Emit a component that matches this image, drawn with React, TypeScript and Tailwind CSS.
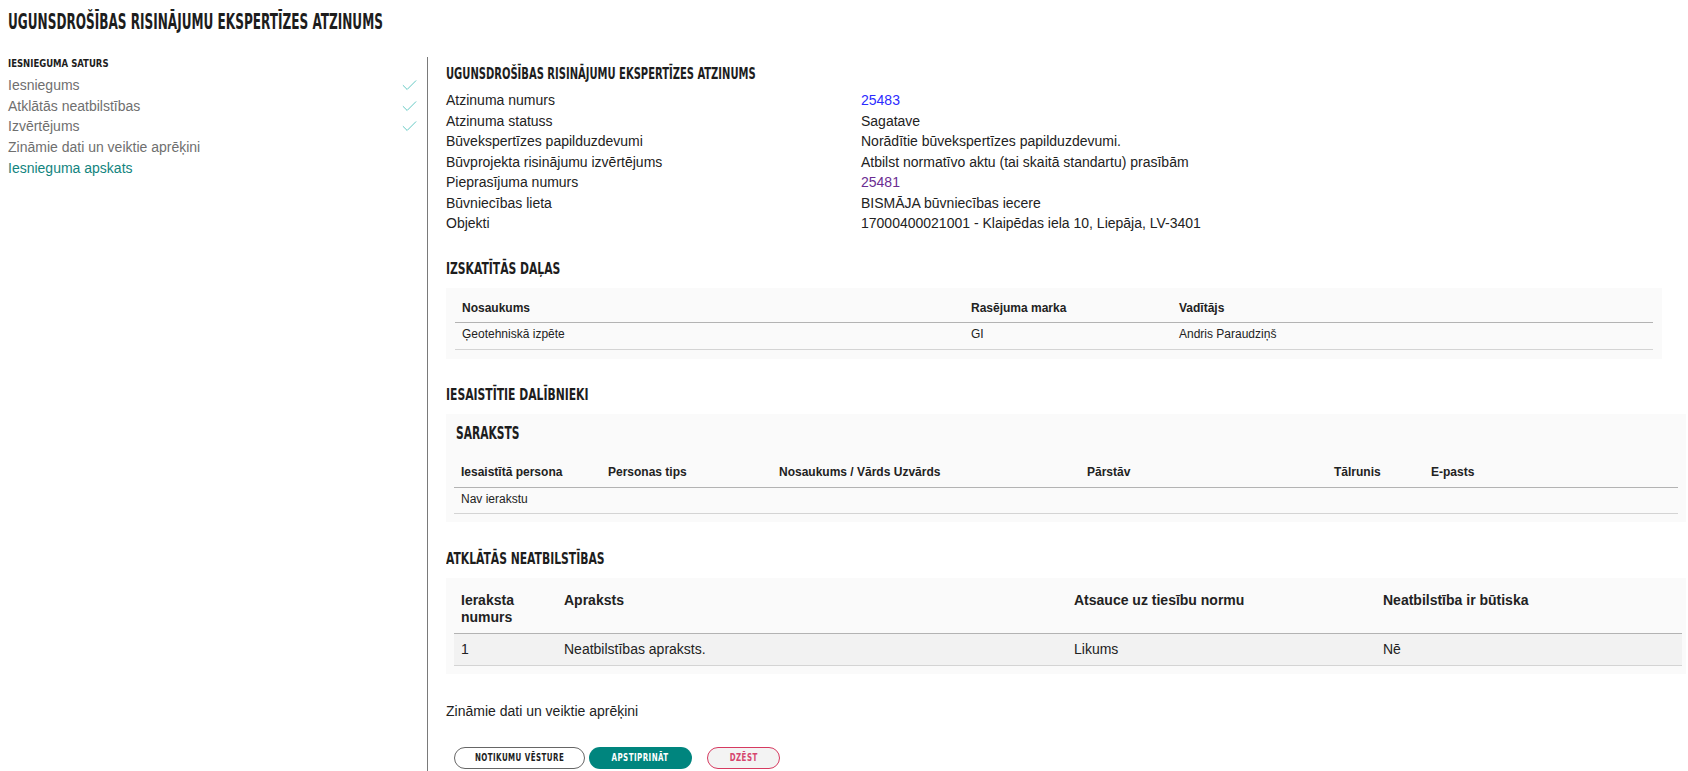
import { Check } from "lucide-react"

const head = "font-['Liberation_Sans_Narrow','DejaVu_Sans_Condensed',sans-serif] font-bold uppercase text-[#1d1d1d]"

const details: [string, string, string?][] = [
  ["Atzinuma numurs", "25483", "text-[#2b2bff]"],
  ["Atzinuma statuss", "Sagatave"],
  ["Būvekspertīzes papilduzdevumi", "Norādītie būvekspertīzes papilduzdevumi."],
  ["Būvprojekta risinājumu izvērtējums", "Atbilst normatīvo aktu (tai skaitā standartu) prasībām"],
  ["Pieprasījuma numurs", "25481", "text-[#6b2c91]"],
  ["Būvniecības lieta", "BISMĀJA būvniecības iecere"],
  ["Objekti", "17000400021001 - Klaipēdas iela 10, Liepāja, LV-3401"],
]

const nav = [
  { label: "Iesniegums", done: true },
  { label: "Atklātās neatbilstības", done: true },
  { label: "Izvērtējums", done: true },
  { label: "Zināmie dati un veiktie aprēķini", done: false },
]

// condensed display face squeezed to the width of the original heading font
function Squeeze({ children, className }: { children: string; className: string }) {
  return <span className={`inline-block whitespace-nowrap ${className}`}>{children}</span>
}

function SectionTitle({ children }: { children: string }) {
  return (
    <h3 className={`${head} text-[16px] leading-[20px] mb-[9px]`}>
      <Squeeze className="origin-left scale-x-[0.75]">{children}</Squeeze>
    </h3>
  )
}

export default function App() {
  return (
    <div className="min-h-screen bg-white font-['Liberation_Sans',Arial,sans-serif] text-[#222]">
      <h1 className={`${head} text-[21px] leading-[28px] pl-2 pt-[8px]`}>
        <Squeeze className="origin-left scale-x-[0.64]">Ugunsdrošības risinājumu ekspertīzes atzinums</Squeeze>
      </h1>

      <div className="flex mt-[21px]">
        {/* Sidebar */}
        <aside className="w-[427px] shrink-0 pl-2 pr-[8px]">
          <div className={`${head} text-[11px] leading-[14px]`}>
            <Squeeze className="origin-left scale-x-[0.86]">Iesnieguma saturs</Squeeze>
          </div>
          <ul className="mt-[4px] text-[14px] leading-[20.7px] text-[#6f6f6f]">
            {nav.map((n) => (
              <li key={n.label} className="flex items-center justify-between">
                <span>{n.label}</span>
                {n.done && <Check className="w-[19px] h-[19px] text-[#5cc6c0]" strokeWidth={1.2} />}
              </li>
            ))}
            <li className="text-[#12847e]">Iesnieguma apskats</li>
          </ul>
        </aside>

        {/* Main content */}
        <main className="flex-1 border-l border-[#7a7a7a] pl-[18px] pt-[7px] pr-[2px] pb-[2px]">
          <h2 className={`${head} text-[15px] leading-[20px]`}>
            <Squeeze className="origin-left scale-x-[0.74]">Ugunsdrošības risinājumu ekspertīzes atzinums</Squeeze>
          </h2>
          <div className="mt-[6px] text-[14px] leading-[20.5px]">
            {details.map(([k, v, c]) => (
              <div key={k} className="flex">
                <div className="w-[415px] shrink-0">{k}</div>
                <div className={c ?? ""}>{v}</div>
              </div>
            ))}
          </div>

          {/* Izskatītās daļas */}
          <div className="mt-[25px]">
            <SectionTitle>Izskatītās daļas</SectionTitle>
            <div className="bg-[#fafafa] w-[1216px] px-[9px] pt-[13px] pb-[9px]">
              <table className="w-full text-[12px] leading-[14px] border-collapse">
                <thead>
                  <tr className="border-b border-[#b3b3b3] text-left">
                    <th className="w-[509px] pl-[7px] pb-[7px] font-bold">Nosaukums</th>
                    <th className="w-[208px] pl-[7px] pb-[7px] font-bold">Rasējuma marka</th>
                    <th className="pl-[7px] pb-[7px] font-bold">Vadītājs</th>
                  </tr>
                </thead>
                <tbody>
                  <tr className="border-b border-[#d4d4d4]">
                    <td className="pl-[7px] pt-[4px] pb-[8px]">Ģeotehniskā izpēte</td>
                    <td className="pl-[7px] pt-[4px] pb-[8px]">GI</td>
                    <td className="pl-[7px] pt-[4px] pb-[8px]">Andris Paraudziņš</td>
                  </tr>
                </tbody>
              </table>
            </div>
          </div>

          {/* Iesaistītie dalībnieki */}
          <div className="mt-[26px]">
            <SectionTitle>Iesaistītie dalībnieki</SectionTitle>
            <div className="bg-[#fafafa] px-[8px] pt-[8px] pb-[8px]">
              <div className={`${head} text-[18px] leading-[22px] pl-[2px]`}>
                <Squeeze className="origin-left scale-x-[0.66]">Saraksts</Squeeze>
              </div>
              <table className="mt-[21px] w-full text-[12px] leading-[14px] border-collapse">
                <thead>
                  <tr className="border-b border-[#b3b3b3] text-left">
                    <th className="w-[147px] pl-[7px] pb-[8px] font-bold">Iesaistītā persona</th>
                    <th className="w-[171px] pl-[7px] pb-[8px] font-bold">Personas tips</th>
                    <th className="w-[308px] pl-[7px] pb-[8px] font-bold">Nosaukums / Vārds Uzvārds</th>
                    <th className="w-[247px] pl-[7px] pb-[8px] font-bold">Pārstāv</th>
                    <th className="w-[97px] pl-[7px] pb-[8px] font-bold">Tālrunis</th>
                    <th className="pl-[7px] pb-[8px] font-bold">E-pasts</th>
                  </tr>
                </thead>
                <tbody>
                  <tr className="border-b border-[#d4d4d4]">
                    <td colSpan={6} className="pl-[7px] pt-[4px] pb-[7px]">
                      Nav ierakstu
                    </td>
                  </tr>
                </tbody>
              </table>
            </div>
          </div>

          {/* Atklātās neatbilstības */}
          <div className="mt-[27px]">
            <SectionTitle>Atklātās neatbilstības</SectionTitle>
            <div className="bg-[#fafafa] pl-[8px] pr-[4px] pt-[14px] pb-[8px]">
              <table className="w-full text-[14px] leading-[17px] border-collapse">
                <thead>
                  <tr className="border-b border-[#b3b3b3] text-left align-top">
                    <th className="w-[103px] pl-[7px] pr-[7px] pb-[7px] font-bold">Ieraksta numurs</th>
                    <th className="w-[510px] pl-[7px] pb-[7px] font-bold">Apraksts</th>
                    <th className="w-[309px] pl-[7px] pb-[7px] font-bold">Atsauce uz tiesību normu</th>
                    <th className="pl-[7px] pb-[7px] font-bold">Neatbilstība ir būtiska</th>
                  </tr>
                </thead>
                <tbody>
                  <tr className="bg-[#f2f2f2] border-b border-[#d4d4d4]">
                    <td className="pl-[7px] py-[7px]">1</td>
                    <td className="pl-[7px] py-[7px]">Neatbilstības apraksts.</td>
                    <td className="pl-[7px] py-[7px]">Likums</td>
                    <td className="pl-[7px] py-[7px]">Nē</td>
                  </tr>
                </tbody>
              </table>
            </div>
          </div>

          <p className="mt-[27px] text-[14px] leading-[20px]">Zināmie dati un veiktie aprēķini</p>

          <div className="mt-[26px] pl-[8px] flex items-center">
            <button className={`${head} w-[131px] h-[22px] rounded-full border border-[#666] bg-white text-[10.5px] tracking-[0.6px]`}>
              <Squeeze className="origin-center scale-x-[0.75]">Notikumu vēsture</Squeeze>
            </button>
            <button className={`${head} ml-[4px] w-[103px] h-[22px] rounded-full bg-[#00857e] text-white text-[10.5px] tracking-[0.6px]`}>
              <Squeeze className="origin-center scale-x-[0.75]">Apstiprināt</Squeeze>
            </button>
            <button className={`${head} ml-[15px] w-[73px] h-[22px] rounded-full border border-[#d63a60] bg-[#f3f3f3] text-[#d6456d] text-[10.5px] tracking-[0.6px]`}>
              <Squeeze className="origin-center scale-x-[0.75]">Dzēst</Squeeze>
            </button>
          </div>
        </main>
      </div>
    </div>
  )
}
